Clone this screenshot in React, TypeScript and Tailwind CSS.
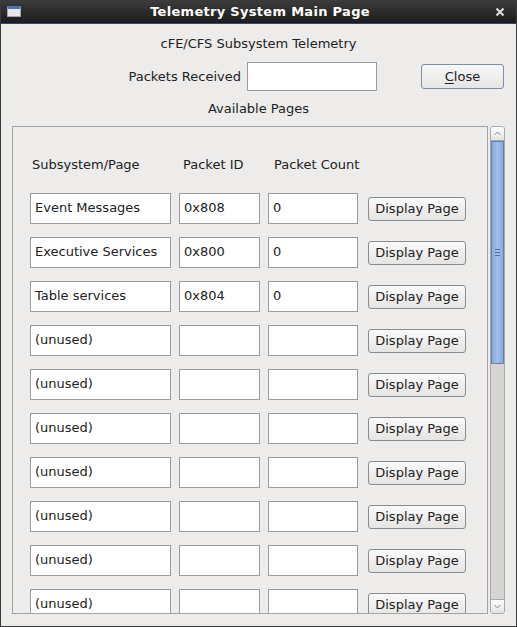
import React from 'react'

interface PageRow {
  name: string
  id: string
  count: string
}

const ROWS: PageRow[] = [
  { name: 'Event Messages', id: '0x808', count: '0' },
  { name: 'Executive Services', id: '0x800', count: '0' },
  { name: 'Table services', id: '0x804', count: '0' },
  { name: '(unused)', id: '', count: '' },
  { name: '(unused)', id: '', count: '' },
  { name: '(unused)', id: '', count: '' },
  { name: '(unused)', id: '', count: '' },
  { name: '(unused)', id: '', count: '' },
  { name: '(unused)', id: '', count: '' },
  { name: '(unused)', id: '', count: '' },
]

const font = { fontFamily: '"DejaVu Sans", "Liberation Sans", sans-serif' }

function Field({ value, className }: { value: string; className: string }) {
  return (
    <div className={`h-[31px] shrink-0 bg-white border border-[#9c9c9c] pl-[4px] pb-[1px] flex items-center text-[13px] text-[#222] ${className}`}>
      {value}
    </div>
  )
}

function Scrollbar() {
  return (
    <div className="w-[15px] h-[488px] ml-[2px] flex flex-col bg-[#d6d5d4] border border-[#a9a9a9] rounded-[3px] overflow-hidden">
      <div className="h-[14px] bg-gradient-to-b from-white to-[#e4e3e2] border-b border-[#a9a9a9] flex items-center justify-center">
        <svg width="7" height="5" viewBox="0 0 7 5"><path d="M0.5 4 L3.5 1 L6.5 4" fill="none" stroke="#8a8a8a" strokeWidth="1" /></svg>
      </div>
      <div className="h-[223px] bg-gradient-to-r from-[#86a9dc] via-[#a4c0ea] to-[#86a9dc] border border-[#5f82b8] flex items-center justify-center">
        <div className="flex flex-col gap-[2px]">
          <div className="w-[5px] h-px bg-[#4f6f9f]" />
          <div className="w-[5px] h-px bg-[#4f6f9f]" />
          <div className="w-[5px] h-px bg-[#4f6f9f]" />
        </div>
      </div>
      <div className="flex-1" />
      <div className="h-[14px] bg-gradient-to-b from-white to-[#e4e3e2] border-t border-[#a9a9a9] flex items-center justify-center">
        <svg width="7" height="5" viewBox="0 0 7 5"><path d="M0.5 1 L3.5 4 L6.5 1" fill="none" stroke="#8a8a8a" strokeWidth="1" /></svg>
      </div>
    </div>
  )
}

export default function App() {
  return (
    <div style={font} className="w-[517px] h-[627px] bg-[#edeceb] flex flex-col overflow-hidden border-x border-b border-[#3a3a3a] text-[#222]">
      {/* Title bar */}
      <div className="h-[24px] shrink-0 bg-gradient-to-b from-[#3c3c3c] to-[#1c1c1c] border-b border-[#304a6e] flex items-center px-[6px]">
        <div className="w-[14px] h-[11px] bg-[#e8e8e8] border border-[#9aa8bc] border-t-[3px] border-t-[#4a73b0]" />
        <div className="flex-1 text-center text-white font-bold text-[13px] tracking-[0.3px] pl-[4px]">Telemetry System Main Page</div>
        <svg width="10" height="10" viewBox="0 0 10 10" className="mr-[5px]">
          <path d="M1.5 1.5 L8.5 8.5 M8.5 1.5 L1.5 8.5" stroke="#d8d8d8" strokeWidth="2.2" />
        </svg>
      </div>

      <div className="text-center text-[13px] mt-[12px] leading-[16px]">cFE/CFS Subsystem Telemetry</div>

      <div className="flex items-center mt-[10px] pl-[115px]">
        <div className="w-[125px] text-right text-[13px]">Packets Received</div>
        <div className="ml-[6px] w-[130px] h-[29px] bg-white border border-[#9c9c9c]" />
        <button className="ml-[44px] w-[83px] h-[25px] rounded-[3px] border border-[#7d8fa9] bg-gradient-to-b from-[#f8f8f8] to-[#e6e5e4] text-[13px]">
          <span className="underline underline-offset-2">C</span>lose
        </button>
      </div>

      <div className="text-center text-[13px] mt-[10px] leading-[16px]">Available Pages</div>

      {/* Pages list */}
      <div className="flex mt-[9px] pl-[11px]">
        <div className="w-[476px] h-[488px] border border-[#a3a3a3] overflow-hidden pl-[17px] pt-[28px]">
          <div className="flex text-[13px] h-[20px] items-center">
            <div className="w-[153px] pl-[2px]">Subsystem/Page</div>
            <div className="w-[91px]">Packet ID</div>
            <div>Packet Count</div>
          </div>
          <div className="flex flex-col gap-[13px] mt-[18px]">
            {ROWS.map((row, i) => (
              <div key={i} className="flex items-center">
                <Field value={row.name} className="w-[141px]" />
                <Field value={row.id} className="w-[81px] ml-[8px]" />
                <Field value={row.count} className="w-[90px] ml-[8px]" />
                <button className="ml-[10px] w-[98px] h-[24px] shrink-0 rounded-[3px] border border-[#8c8c8c] bg-gradient-to-b from-[#fafafa] to-[#e5e4e3] text-[13px]">
                  Display Page
                </button>
              </div>
            ))}
          </div>
        </div>
        <Scrollbar />
      </div>
    </div>
  )
}
